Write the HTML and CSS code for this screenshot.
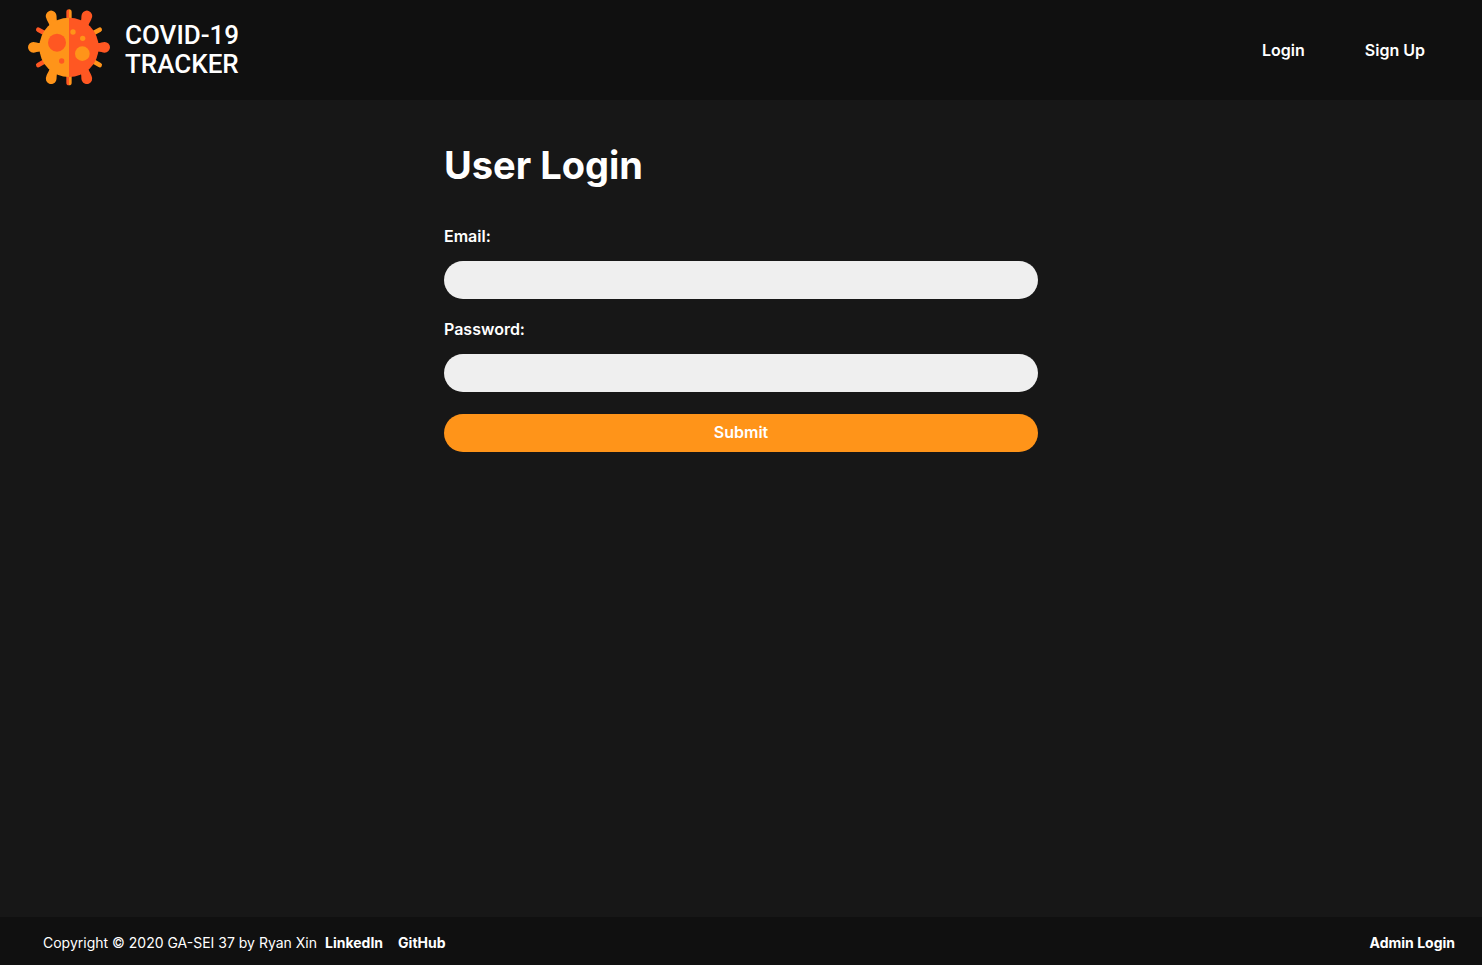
FILE: index.html
```html
<!DOCTYPE html>
<html lang="en">
<head>
<meta charset="utf-8">
<meta name="viewport" content="width=device-width, initial-scale=1">
<title>COVID-19 Tracker</title>
<link rel="stylesheet" href="styles.css">
</head>
<body>
<header class="header">
  <a class="brand" href="#">
    <svg class="brand-icon" viewBox="24 28 246 231" aria-hidden="true">
      <g fill="none" stroke-linecap="round" stroke-width="14">
        <path stroke="#ff5722" d="M55 90L80 104M55 196L80 182"/>
        <path stroke="#ff9419" d="M239 90L214 104M239 196L214 182"/>
      </g>
      <g fill="#ff9419">
        <path d="M40 127C48 127 52 131 66 130V156C52 155 48 159 40 159A16 16 0 0 1 40 127Z"/>
        <path d="M79 56A16 16 0 0 1 108 42C112 51 107 60 115 72L90 86C88 68 82 67 79 56Z"/>
        <path d="M79 230A16 16 0 0 0 108 244C112 235 107 226 115 214L90 200C88 218 82 219 79 230Z"/>
      </g>
      <g fill="#ff5722">
        <path d="M254 127C246 127 242 131 228 130V156C242 155 246 159 254 159A16 16 0 0 0 254 127Z"/>
        <path d="M215 56A16 16 0 0 0 186 42C182 51 187 60 179 72L204 86C206 68 212 67 215 56Z"/>
        <path d="M215 230A16 16 0 0 1 186 244C182 235 187 226 179 214L204 200C206 218 212 219 215 230Z"/>
      </g>
      <path fill="#ff5722" d="M139 60V37A8 8 0 0 1 147 29V60ZM139 226V249A8 8 0 0 0 147 257V226Z"/>
      <path fill="#ff9419" d="M155 60V37A8 8 0 0 0 147 29V60ZM155 226V249A8 8 0 0 1 147 257V226Z"/>
      <path fill="#ff9419" d="M147 54A89 89 0 0 0 147 232Z"/>
      <path fill="#ff5722" d="M147 54A89 89 0 0 1 147 232Z"/>
      <g fill="#ff5722"><circle cx="111" cy="129" r="27"/><circle cx="125" cy="184" r="8"/></g>
      <g fill="#ff9419"><circle cx="187" cy="162" r="22"/><circle cx="188" cy="116" r="8"/><circle cx="159" cy="97" r="8"/></g>
    </svg>
    <span class="brand-name">COVID-19<br>TRACKER</span>
  </a>
  <nav class="nav">
    <a href="#">Login</a>
    <a href="#">Sign Up</a>
  </nav>
</header>
<main class="main">
  <form class="form">
    <h1 class="title">User Login</h1>
    <label class="label" for="email">Email:</label>
    <input class="field" id="email" type="email">
    <label class="label" for="password">Password:</label>
    <input class="field" id="password" type="password">
    <button class="submit" type="submit">Submit</button>
  </form>
</main>
<footer class="footer">
  <div class="credits">
    <span>Copyright © 2020 GA-SEI 37 by Ryan Xin</span>
    <div class="links">
      <a href="#">LinkedIn</a>
      <a href="#">GitHub</a>
    </div>
  </div>
  <a href="#">Admin Login</a>
</footer>
</body>
</html>
```
FILE: styles.css
```css
* {
  box-sizing: border-box;
}

body {
  display: flex;
  flex-direction: column;
  min-height: 100vh;
  margin: 0;
  background: #171717;
  color: #fff;
  font: 16px/20px Inter, sans-serif;
}

a {
  color: #fff;
  font-weight: 700;
  text-decoration: none;
}

.header {
  display: flex;
  align-items: center;
  justify-content: space-between;
  min-height: 100px;
  padding: 0 57px 0 28px;
  background: #101010;
}

.brand {
  display: flex;
  align-items: center;
  gap: 15px;
  padding-bottom: 5px;
}

.brand-icon {
  display: block;
  width: 82px;
  height: 77px;
}

.brand-name {
  padding-top: 5px;
  font: 500 26px/29px Roboto, sans-serif;
}

.nav {
  display: flex;
  gap: 60px;
}

.nav a,
.label,
.submit {
  font-weight: 600;
}

.main {
  flex: 1;
  padding: 40px 20px;
}

.form {
  display: flex;
  flex-direction: column;
  max-width: 594px;
  margin: 0 auto;
}

.title {
  margin: 0 0 36px;
  font-size: 38px;
  line-height: 50px;
  font-weight: 700;
}

.label {
  margin-bottom: 15px;
}

.field,
.submit {
  width: 100%;
  height: 38px;
  border: 0;
  border-radius: 19px;
  font-family: inherit;
  font-size: 16px;
}

.field {
  margin-bottom: 20px;
  padding: 0 20px;
  background: #efefef;
}

.submit {
  margin-top: 2px;
  padding-bottom: 3px;
  background: #ff9419;
  color: #fff;
}

.footer {
  display: flex;
  align-items: center;
  justify-content: space-between;
  min-height: 48px;
  padding: 3px 27px 0 43px;
  background: #101010;
  font-size: 14px;
}

.credits {
  display: flex;
  gap: 8px;
}

.links {
  display: flex;
  gap: 15px;
}
```
